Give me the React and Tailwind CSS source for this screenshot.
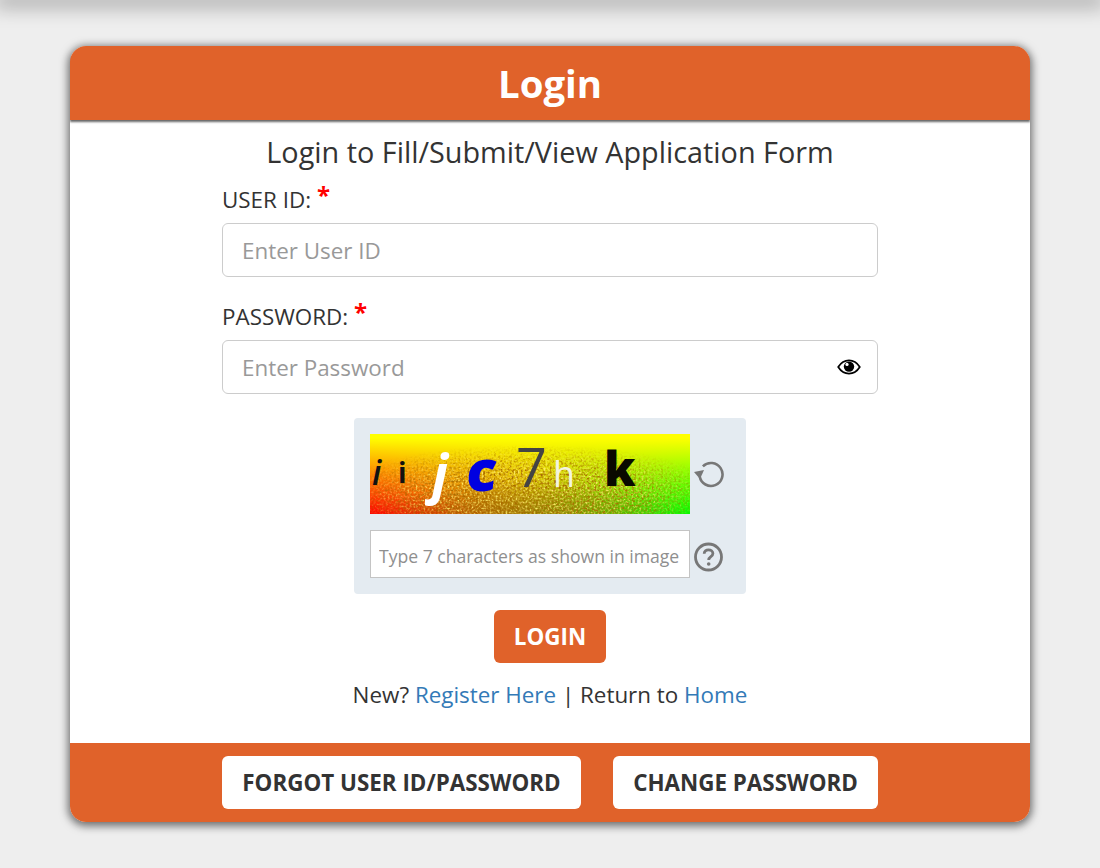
import React from "react";

function Captcha() {
  return (
    <div className="relative w-[320px] h-[80px] shrink-0 bg-[#ffff00]">
      <svg className="absolute inset-0 w-full h-full" viewBox="0 0 320 80" preserveAspectRatio="none">
        <defs>
          <linearGradient id="g1" x1="0" y1="0" x2="0" y2="1">
            <stop offset="0.05" stopColor="#ffff00" />
            <stop offset="1" stopColor="#ffff00" stopOpacity="0" />
          </linearGradient>
          <linearGradient id="g2" x1="0" y1="0" x2="1" y2="0">
            <stop offset="0" stopColor="#ff0000" />
            <stop offset="0.5" stopColor="#c09000" />
            <stop offset="1" stopColor="#00ff00" />
          </linearGradient>
          <radialGradient id="g3" cx="0.5" cy="1" r="0.45">
            <stop offset="0" stopColor="#6a6000" stopOpacity="0.5" />
            <stop offset="1" stopColor="#6a6000" stopOpacity="0" />
          </radialGradient>
          <filter id="noise" x="0" y="0" width="100%" height="100%">
            <feTurbulence type="fractalNoise" baseFrequency="0.5" numOctaves="2" seed="4" />
            <feColorMatrix values="0 0 0 0 1  0 0 0 0 0.85  0 0 0 0 0.15  1.8 1.8 0 0 -1.6" />
          </filter>
          <filter id="noise2" x="0" y="0" width="100%" height="100%">
            <feTurbulence type="fractalNoise" baseFrequency="0.45" numOctaves="2" seed="11" />
            <feColorMatrix values="0 0 0 0 0.4  0 0 0 0 0.15  0 0 0 0 0  2 2 0 0 -1.85" />
          </filter>
          <radialGradient id="fade" cx="0.5" cy="0.75" r="0.62">
            <stop offset="0.45" stopColor="#fff" stopOpacity="1" />
            <stop offset="1" stopColor="#fff" stopOpacity="0" />
          </radialGradient>
          <mask id="m1">
            <rect width="320" height="80" fill="url(#fade)" />
          </mask>
        </defs>
        <rect width="320" height="80" fill="url(#g2)" />
        <rect width="320" height="80" fill="url(#g1)" />
        <rect width="320" height="80" fill="url(#g3)" />
        <g mask="url(#m1)">
          <rect width="320" height="80" filter="url(#noise)" />
          <rect width="320" height="80" filter="url(#noise2)" />
        </g>
      </svg>
      <span className="absolute left-[2px] top-[18px] text-[34px] leading-[40px] font-semibold italic text-[#111]">i</span>
      <span className="absolute left-[28px] top-[20px] text-[28px] leading-[36px] font-bold text-[#111]">i</span>
      <span className="absolute left-[62px] top-[8px] text-[54px] leading-[60px] font-bold italic text-white">j</span>
      <span className="absolute left-[97px] top-[5px] text-[56px] leading-[60px] font-extrabold text-[#0000e0] -skew-x-6">c</span>
      <span className="absolute left-[146px] top-[2px] text-[54px] leading-[60px] font-medium text-[#444]">7</span>
      <span className="absolute left-[183px] top-[18px] text-[36px] leading-[44px] text-[#f4f4e0]">h</span>
      <span className="absolute left-[234px] top-[4px] text-[48px] leading-[60px] font-extrabold text-[#0a0a00]">k</span>
    </div>
  );
}

function Field({ label, placeholder, icon, className }) {
  return (
    <div className={className}>
      <label className="block h-[40px] text-[22.4px] leading-[34px] text-[#333]">
        {label}: <span className="text-[24px] leading-[20px] align-[4px] font-bold text-[#ff0000]">*</span>
      </label>
      <div className="relative">
        <input
          placeholder={placeholder}
          className="block w-full h-[54px] pl-[19px] pr-5 rounded-md border border-[#ccc] bg-white text-[22.4px] text-[#555] placeholder:text-[#999] outline-none"
        />
        {icon}
      </div>
    </div>
  );
}

export default function App() {
  return (
    <div className="min-h-[868px] bg-[#eeeeee] font-['Open_Sans',sans-serif]">
      <div className="h-0 shadow-[0_0_20px_6px_rgba(0,0,0,0.36)]" />
      <div className="pt-[46px] px-[70px]">
        <div className="h-[776px] rounded-[16px] bg-white flex flex-col overflow-hidden shadow-[0_2px_8px_2px_rgba(0,0,0,0.55)]">
          <div className="h-[74px] shrink-0 bg-[#e0622a] flex items-center justify-center shadow-[0_2px_2px_rgba(0,0,0,0.6)] z-10">
            <h1 className="text-[38.4px] leading-[52px] font-bold text-white">Login</h1>
          </div>
          <div className="flex-1 flex flex-col items-center">
            <p className="mt-[12px] text-[28.8px] leading-[40px] text-[#333]">Login to Fill/Submit/View Application Form</p>
            <div className="w-[656px] mt-[11px]">
              <Field label="USER ID" placeholder="Enter User ID" />
              <Field
                className="mt-[23px]"
                label="PASSWORD"
                placeholder="Enter Password"
                icon={
                  <svg className="absolute right-[17px] top-[17px] w-[24px] h-[20px]" viewBox="0 0 24 20" fill="none">
                    <path d="M1.2 10C4 5.6 7.8 3.4 12 3.4S20 5.6 22.8 10C20 14.4 16.2 16.6 12 16.6S4 14.4 1.2 10Z" stroke="#000" strokeWidth="1.7" />
                    <circle cx="12" cy="9.6" r="5.2" fill="#000" />
                    <circle cx="10" cy="7.4" r="1.6" fill="#fff" />
                  </svg>
                }
              />
            </div>
            <div className="mt-[24px] w-[392px] h-[176px] rounded bg-[#e4ebf1] p-4">
              <div className="flex items-center gap-[3px]">
                <Captcha />
                <svg className="w-[32px] h-[32px]" viewBox="0 0 32 32" fill="none">
                  <path d="M9.9 8.3A11.5 11.5 0 1 1 6.7 18.5" stroke="#777" strokeWidth="2.6" />
                  <path d="M1 14 11 12 7 21Z" fill="#777" />
                </svg>
              </div>
              <div className="mt-4 flex items-center gap-[3px]">
                <input
                  placeholder="Type 7 characters as shown in image"
                  className="block w-[320px] h-[48px] shrink-0 pl-2 pr-2 pt-[3px] border border-[#c4c4c4] bg-white text-[17.6px] placeholder:text-[#8f8f8f] outline-none"
                />
                <svg className="w-[32px] h-[32px] mt-[5px]" viewBox="0 0 32 32" fill="none">
                  <circle cx="15.5" cy="16" r="13" stroke="#777" strokeWidth="2.8" />
                  <path d="M11.2 12.8C11.2 10.2 13.2 8.8 15.5 8.8S19.9 10.2 19.9 12.6C19.9 15.8 15.7 15.6 15.7 19" stroke="#777" strokeWidth="2.8" />
                  <circle cx="15.7" cy="23" r="1.8" fill="#777" />
                </svg>
              </div>
            </div>
            <button className="mt-4 w-[112px] h-[53px] rounded-md bg-[#e0622a] text-[22.4px] font-bold text-white">LOGIN</button>
            <p className="mt-[17px] text-[22.4px] leading-[30px] text-[#333]">
              New? <a className="text-[#337ab7]">Register Here</a> | Return to <a className="text-[#337ab7]">Home</a>
            </p>
          </div>
          <div className="h-[79px] shrink-0 bg-[#e0622a] flex items-start justify-center gap-[32px] pt-[13px]">
            <button className="h-[53px] w-[359px] rounded-md bg-white text-[22.4px] font-bold text-[#333]">FORGOT USER ID/PASSWORD</button>
            <button className="h-[53px] w-[265px] rounded-md bg-white text-[22.4px] font-bold text-[#333]">CHANGE PASSWORD</button>
          </div>
        </div>
      </div>
    </div>
  );
}
